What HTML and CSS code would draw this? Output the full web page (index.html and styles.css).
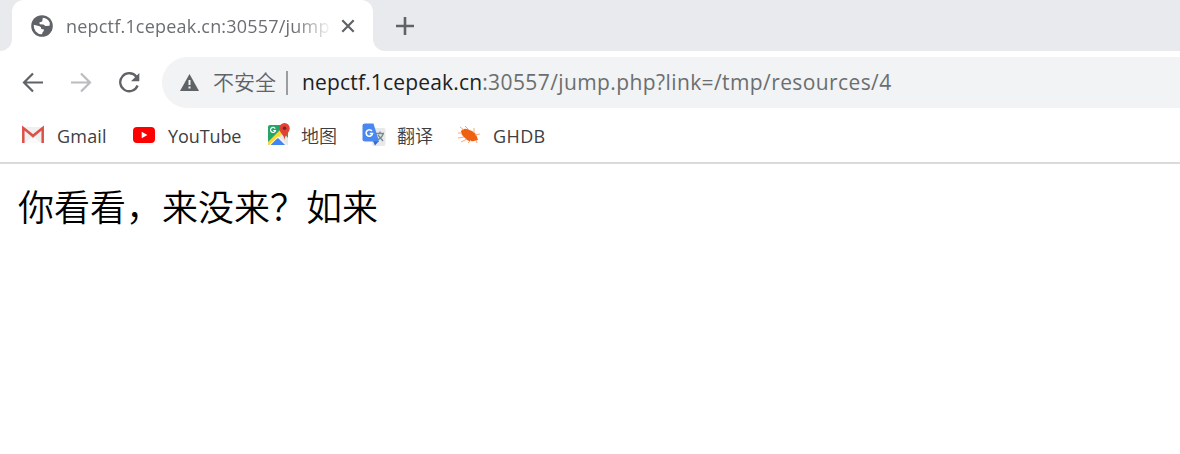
FILE: index.html
```html
<!DOCTYPE html>
<html lang="zh-CN">
<head>
<meta charset="utf-8">
<title>nepctf.1cepeak.cn:30557/jump.php</title>
<link rel="stylesheet" href="styles.css">
</head>
<body>
<header class="tabstrip">
  <div class="strip-left"></div>
  <div class="tab">
    <svg class="globe" width="22" height="22" viewBox="0 0 22 22"><circle cx="11" cy="11" r="10.8" fill="#5f6368"/><path d="M2.8 9.8 L8.5 11.2 Q10.4 11.8 10.3 14 L13 14.5 Q13.2 16.3 11.6 17.2 L11 19.3 A8.3 8.3 0 0 1 2.8 9.8Z M11.8 2.8 Q16.8 3.5 18.8 7.8 L18.6 10.8 L14.4 11 L12.4 9.4 L8.8 9.2 L8.3 7.5 L11.2 6.5Z" fill="#fff"/></svg>
    <span class="tab-title">nepctf.1cepeak.cn:30557/jump</span>
    <svg class="close" width="14" height="14" viewBox="0 0 14 14"><path d="M1.3 1.3 12.7 12.7M12.7 1.3 1.3 12.7" stroke="#5f6368" stroke-width="2.2"/></svg>
  </div>
  <div class="strip-right">
    <svg width="18" height="18" viewBox="0 0 18 18"><path d="M9 0V18M0 9H18" stroke="#5f6368" stroke-width="2.6"/></svg>
  </div>
</header>
<nav class="toolbar">
  <svg class="nav-icon" width="22" height="22" viewBox="0 0 22 22"><path d="M21 10.5H3M11 1.5 2 10.5 11 19.5" fill="none" stroke="#5f6368" stroke-width="2.2"/></svg>
  <svg class="nav-icon" width="22" height="22" viewBox="0 0 22 22"><path d="M1 10.5H19M11 1.5 20 10.5 11 19.5" fill="none" stroke="#babcbe" stroke-width="2.2"/></svg>
  <svg class="nav-icon" width="22" height="22" viewBox="0 0 22 22"><path d="M18.4 4.8A9 9 0 1 0 19.6 13.5" fill="none" stroke="#5f6368" stroke-width="2.3"/><path d="M21.3 1V9.2H13Z" fill="#5f6368"/></svg>
  <div class="omnibox">
    <svg width="19" height="17" viewBox="0 0 19 17"><path d="M9.5 0 19 17H0Z" fill="#5f6368"/><path d="M9.5 6V11M9.5 12.5V14.5" stroke="#f1f3f4" stroke-width="2"/></svg>
    <span class="insecure">不安全</span>
    <span class="divider"></span>
    <span class="url"><span class="domain">nepctf.1cepeak.cn</span><span class="path">:30557/jump.php?link=/tmp/resources/4</span></span>
  </div>
</nav>
<div class="bookmarks">
  <a class="bookmark gmail"><svg width="24" height="24" viewBox="0 0 24 24"><path d="M2 4H22V20H2Z" fill="#f0f0f0"/><path d="M4 20 12 13 20 20Z" fill="#fafafa"/><path d="M4 6 12 14 20 6" fill="none" stroke="#d5cccc" stroke-width="2"/><path d="M2.3 20V5L12 12.8 21.7 5V20" fill="none" stroke="#dc5047" stroke-width="2.5"/></svg><span>Gmail</span></a>
  <a class="bookmark youtube"><svg width="24" height="24" viewBox="0 0 24 24"><rect x="1" y="4" width="22" height="16" rx="4" fill="#f00"/><path d="M9.7 8.8V15.2L15.4 12Z" fill="#fff"/></svg><span>YouTube</span></a>
  <a class="bookmark maps"><svg width="24" height="24" viewBox="0 0 24 24"><g transform="translate(1 0)"><rect x="1" y="2" width="20" height="20" rx="2" fill="#27a467"/><path d="M10 13 15 8 21 15V22H10Z" fill="#e8e8e8"/><path d="M1 19 14 6 17 9 4 22H2L1 21Z" fill="#fdd835"/><path d="M4 22 11 15 18 22Z" fill="#4285f4"/><path d="M2.5 22 11 13.8 19.5 22" fill="none" stroke="#fff" stroke-width="1"/><path d="M8.2 5.6A2.5 2.5 0 1 0 8.5 7.5H6.3" fill="none" stroke="#fff" stroke-width="1.2"/><path d="M17.5 0A5.2 5.2 0 0 0 12.3 5.2C12.3 10 17 11 17.5 17 18 11 22.7 10 22.7 5.2A5.2 5.2 0 0 0 17.5 0Z" fill="#e34133"/><circle cx="17.5" cy="5.2" r="1.8" fill="#7b231e"/></g></svg><span>地图</span></a>
  <a class="bookmark translate"><svg width="24" height="24" viewBox="0 0 24 24"><rect x="10" y="5" width="13.5" height="18" rx="2" fill="#e8e9ea"/><path d="M14 10.5H22M18 8.5V11M16 12 21 18M21 11Q20 15 15 17" fill="none" stroke="#7b898f" stroke-width="1.4"/><path d="M11 18H17L13 22.5Z" fill="#3569c8"/><path d="M3 .5H11.5L17 18.5H3Q.5 18.5 .5 16.5V2.5Q.5 .5 3 .5Z" fill="#4888f0"/><path d="M9.9 8.1A3.2 3.2 0 1 0 10.5 10.5H7.8" fill="none" stroke="#fff" stroke-width="1.6"/></svg><span>翻译</span></a>
  <a class="bookmark ghdb"><svg width="24" height="24" viewBox="0 0 24 24"><path d="M4 8 Q6 5 10 6 L15 8 Q19 10 20 14 L21 17 17 18 Q11 19 8 15 Q4 12 4 8Z" fill="#ef6011"/><path d="M7 7 3 4M12 7 8 3M17 10 17 5M18 12 23 11M7 14 1 15M10 16 4 19M14 17 11 20M5 10 1 10M19 17 20 20" fill="none" stroke="#f6a97f" stroke-width="1"/></svg><span>GHDB</span></a>
</div>
<main class="page">你看看，来没来？如来</main>
</body>
</html>
```
FILE: styles.css
```css
body {
  margin: 0;
  height: 454px;
  overflow: hidden;
  background: #fff;
  font-family: "Noto Sans", "Noto Sans CJK SC", sans-serif;
  font-weight: 400;
  white-space: nowrap;
}
svg { display: block; flex: none; }
.tabstrip {
  display: flex;
  height: 51px;
  background: linear-gradient(#e8eaed, #e8eaed) 0 0 / 100% 39px no-repeat;
}
.strip-left {
  width: 12px;
  background: #e8eaed;
  border-bottom-right-radius: 12px;
}
.tab {
  display: flex;
  align-items: center;
  box-sizing: border-box;
  width: 361px;
  padding-left: 19px;
  background: #fff;
  border-radius: 12px 12px 0 0;
}
.tab-title {
  width: 264px;
  margin-left: 13px;
  overflow: hidden;
  font-family: "Open Sans", sans-serif;
  font-size: 18px;
  line-height: 30px;
  letter-spacing: 0.2px;
  color: #6b6e72;
  mask-image: linear-gradient(90deg, #000 228px, transparent 266px);
}
.close { margin-left: 11px; }
.strip-right {
  display: flex;
  align-items: center;
  flex: 1;
  padding-left: 23px;
  background: #e8eaed;
  border-bottom-left-radius: 12px;
}
.toolbar {
  display: flex;
  align-items: center;
  height: 51px;
  padding: 6px 0 0 22px;
}
.nav-icon { margin-right: 26px; }
.nav-icon:nth-child(3) { margin-right: 22px; }
.omnibox {
  display: flex;
  align-items: center;
  flex: 1;
  height: 51px;
  padding-left: 18px;
  background: #f1f3f4;
  border-radius: 26px 0 0 26px;
}
.insecure {
  margin-left: 14px;
  padding-bottom: 3px;
  width: 63px;
  font-family: "Noto Sans CJK SC", sans-serif;
  font-size: 21px;
  font-weight: 350;
  line-height: 30px;
  color: #5f6368;
}
.divider {
  width: 2px;
  height: 24px;
  margin-left: 10px;
  background: #9b9da0;
}
.url {
  margin-left: 14px;
  padding-bottom: 1px;
  font-family: "Open Sans", sans-serif;
  font-size: 21px;
  line-height: 30px;
  color: #6b6e70;
}
.domain {
  letter-spacing: 0.17px;
  color: #202124;
}
.path { letter-spacing: 0.4px; }
.bookmarks {
  display: flex;
  align-items: center;
  height: 54px;
  border-bottom: 2px solid #dadada;
}
.bookmark {
  display: flex;
  align-items: center;
  box-sizing: border-box;
  font-family: "Open Sans", "Noto Sans CJK SC", sans-serif;
  font-size: 18px;
  line-height: 28px;
  color: #3c4043;
}
.bookmark span {
  margin-left: 12px;
  padding-top: 2px;
}
.gmail { width: 132px; padding-left: 21px; }
.gmail span { letter-spacing: 0.2px; }
.youtube { width: 134px; }
.youtube span { letter-spacing: -0.1px; }
.maps { width: 96px; }
.bookmark.maps span,
.bookmark.translate span {
  margin-left: 11px;
  padding: 0;
  font-family: "Noto Sans CJK SC", sans-serif;
  font-weight: 350;
}
.translate { width: 95px; }
.ghdb span { letter-spacing: 0.4px; }
.page {
  padding: 15px 18px 0;
  font-family: "Noto Sans CJK SC", sans-serif;
  font-size: 36px;
  font-weight: 350;
  line-height: 52px;
  color: #000;
}
```
